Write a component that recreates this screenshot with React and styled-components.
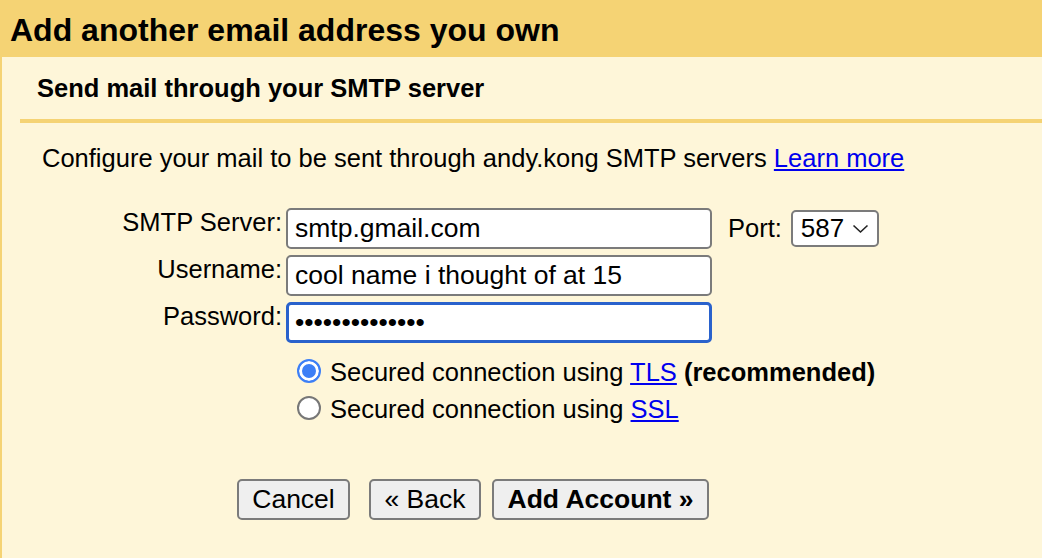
import React, { useState } from "react";
import styled, { createGlobalStyle } from "styled-components";

const GlobalStyle = createGlobalStyle`
  html, body {
    margin: 0;
    padding: 0;
    background: #fef6d9;
  }
  body {
    font-family: "Liberation Sans", Arial, sans-serif;
    color: #000;
  }
`;

const Page = styled.div`
  width: 1042px;
  height: 558px;
  display: flex;
  flex-direction: column;
  overflow: hidden;
`;

const Header = styled.div`
  height: 57px;
  flex: none;
  display: flex;
  align-items: center;
  padding-left: 10px;
  background: #f5d374;
  h1 {
    margin: 0;
    font-size: 32px;
    font-weight: 700;
    line-height: 37px;
    padding-top: 3px;
  }
`;

const Body = styled.div`
  flex: 1;
  border-left: 2px solid #f5d374;
  background: #fef6d9;
  padding-top: 16px;
`;

const SubHeader = styled.h2`
  margin: 0 0 0 18px;
  padding: 0 0 16px 17px;
  border-bottom: 4px solid #f5d374;
  font-size: 25.5px;
  line-height: 30px;
  font-weight: 700;
`;

const Intro = styled.p`
  margin: 20px 0 0 40px;
  font-size: 25.5px;
  line-height: 30px;
`;

const Link = styled.a`
  color: #0000ee;
  text-decoration: underline;
  cursor: pointer;
`;

const FormGrid = styled.div`
  margin-top: 35px;
  display: grid;
  grid-template-columns: 280px 426px auto;
  grid-auto-rows: 41px;
  column-gap: 4px;
  row-gap: 6px;
  font-size: 25.5px;
`;

const Label = styled.label`
  text-align: right;
  line-height: 30px;
  align-self: start;
  margin-top: -1px;
`;

const TextInput = styled.input`
  box-sizing: border-box;
  width: 100%;
  height: 41px;
  margin: 0;
  padding: 0 0 0 ${(p) => (p.focused ? "6px" : "7px")};
  border: ${(p) => (p.focused ? "3px solid #2a62cc" : "2px solid #7b7b7b")};
  border-radius: 5px;
  background: #fff;
  font-family: "Liberation Sans", Arial, sans-serif;
  font-size: 26.5px;
  color: #000;
  outline: none;
`;

const PortCell = styled.div`
  display: flex;
  align-items: center;
  gap: 9px;
  padding-left: 12px;
`;

const SelectBox = styled.div`
  box-sizing: border-box;
  width: 88px;
  height: 37px;
  display: flex;
  align-items: center;
  justify-content: space-between;
  padding: 0 8px 0 8px;
  border: 2px solid #7b7b7b;
  border-radius: 5px;
  background: #fff;
  font-size: 26px;
  svg {
    display: block;
  }
`;

const RadioGroup = styled.div`
  grid-column: 2 / 4;
  grid-row: span 2;
  margin-top: 5px;
  margin-left: 11px;
  display: flex;
  flex-direction: column;
`;

const RadioRow = styled.label`
  height: 37px;
  display: flex;
  align-items: center;
  gap: 9px;
  white-space: nowrap;
  b {
    font-weight: 700;
  }
`;

const Radio = styled.input`
  appearance: none;
  box-sizing: border-box;
  width: 24px;
  height: 24px;
  margin: 0 0 4px 0;
  border-radius: 50%;
  border: 2px solid #777;
  background: #fff;
  flex: none;
  &:checked {
    border-color: #3d7ff6;
    background: #3d7ff6;
    box-shadow: inset 0 0 0 3px #fff;
  }
`;

const Buttons = styled.div`
  margin: 42px 0 0 235px;
  display: flex;
`;

const Button = styled.button`
  box-sizing: border-box;
  height: 41px;
  width: ${(p) => p.w}px;
  margin-left: ${(p) => p.gap || 0}px;
  padding: 0;
  border: 2px solid #7b7b7b;
  border-radius: 5px;
  background: #efefef;
  font-family: "Liberation Sans", Arial, sans-serif;
  font-size: 26.5px;
  font-weight: ${(p) => (p.primary ? 700 : 400)};
  color: #000;
`;

export default function App() {
  const [tls, setTls] = useState(true);
  return (
    <Page>
      <GlobalStyle />
      <Header>
        <h1>Add another email address you own</h1>
      </Header>
      <Body>
        <SubHeader>Send mail through your SMTP server</SubHeader>
        <Intro>
          Configure your mail to be sent through andy.kong SMTP servers{" "}
          <Link>Learn more</Link>
        </Intro>
        <FormGrid>
          <Label>SMTP Server:</Label>
          <TextInput defaultValue="smtp.gmail.com" />
          <PortCell>
            <span>Port:</span>
            <SelectBox>
              <span>587</span>
              <svg width="17" height="10" viewBox="0 0 17 10">
                <path d="M1.5 1.5 L8.5 8 L15.5 1.5" fill="none" stroke="#222" strokeWidth="1.6" />
              </svg>
            </SelectBox>
          </PortCell>
          <Label>Username:</Label>
          <TextInput defaultValue="cool name i thought of at 15" />
          <span />
          <Label>Password:</Label>
          <TextInput type="password" focused defaultValue="aaaaaaaaaaaaaa" />
          <span />
          <span />
          <RadioGroup>
            <RadioRow>
              <Radio type="radio" name="sec" checked={tls} onChange={() => setTls(true)} />
              <span>
                Secured connection using <Link>TLS</Link> <b>(recommended)</b>
              </span>
            </RadioRow>
            <RadioRow>
              <Radio type="radio" name="sec" checked={!tls} onChange={() => setTls(false)} />
              <span>
                Secured connection using <Link>SSL</Link>
              </span>
            </RadioRow>
          </RadioGroup>
        </FormGrid>
        <Buttons>
          <Button w={113}>Cancel</Button>
          <Button w={112} gap={19}>« Back</Button>
          <Button w={217} gap={11} primary>Add Account »</Button>
        </Buttons>
      </Body>
    </Page>
  );
}
